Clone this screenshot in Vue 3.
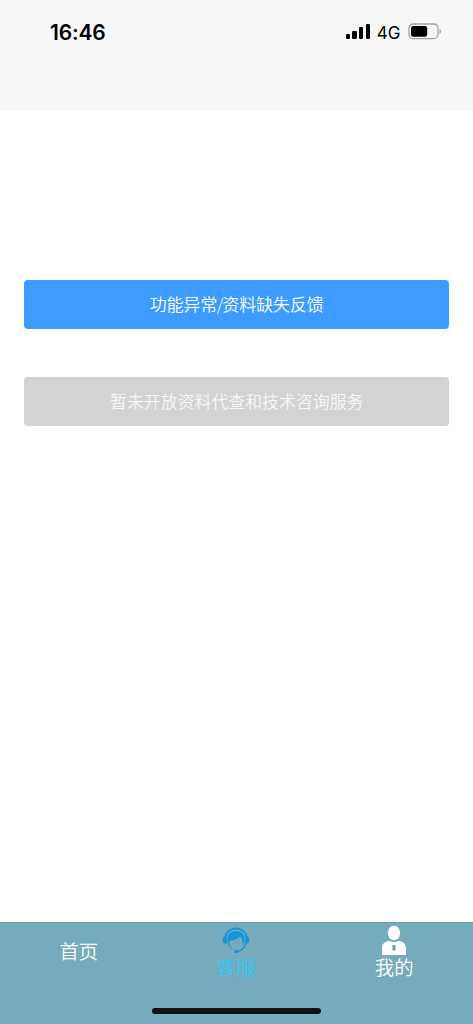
<script setup>
const bars = [5.5, 8.5, 12, 15]
</script>

<template>
  <div class="screen">
    <header class="header">
      <div class="status">
        <span class="time">16:46</span>
        <div class="indicators">
          <div class="signal">
            <i v-for="h in bars" :key="h" :style="{ height: h + 'px' }"></i>
          </div>
          <span class="network">4G</span>
          <svg class="battery" width="34" height="17" viewBox="0 0 34 17">
            <rect x="1" y="1" width="29" height="14.6" rx="4.2" fill="none" stroke="#a2a2a2" stroke-width="1.3" />
            <rect x="3" y="3" width="16.2" height="10.8" rx="2.4" fill="#000" />
            <path d="M31.5 6v5c2-.8 2-4.200 0-5z" fill="#a2a2a2" />
          </svg>
        </div>
      </div>
    </header>

    <main class="content">
      <button class="btn primary"><span>功能异常<span class="slash">/</span>资料缺失反馈</span></button>
      <button class="btn disabled"><span>暂未开放资料代查和技术咨询服务</span></button>
    </main>

    <footer class="footer">
      <nav class="tabs">
        <a class="tab plain"><span>首页</span></a>
        <a class="tab active">
          <svg width="28" height="30" viewBox="0 0 28 30">
            <path d="M3.600 11.500C5.500 .8 22.500 .8 24.400 11.500" fill="none" stroke="#1296db" stroke-width="1.800" />
            <path d="M4.800 10.500C2 10.700 .7 12.200 .7 14.700s1.300 4.300 4.100 4.300zM23.200 10.500c2.800.2 4.100 1.700 4.100 4.200s-1.300 4.300-4.100 4.300z" fill="#1296db" />
            <path d="M5.500 16C4.700 9.500 8 6 14 6s9.300 3.500 8.500 10c-.3 2-.9 3.800-2 5.300.5-4-.2-7.500-2.500-10.100-2.300 2.700-5.800 3.900-9.800 4.500-1.700 2.100-.5 5.500 2.800 8.700C8 23.100 6 20.200 5.500 16z" fill="#1296db" />
            <path d="M24.100 18.500c-1.500 4.400-4.900 7.300-9.100 8" fill="none" stroke="#1296db" stroke-width="1.300" />
            <ellipse cx="14.300" cy="26.500" rx="2.200" ry="1.800" fill="#1296db" />
          </svg>
          <span>客服</span>
        </a>
        <a class="tab">
          <svg width="28" height="30" viewBox="0 0 28 30">
            <ellipse cx="14" cy="8" rx="6.100" ry="7.300" fill="#fff" />
            <path d="M2 30v-6.500c0-4.500 2.400-6.700 7-7.700 3 1.600 7 1.600 10 0 4.600 1 7 3.200 7 7.700V30z" fill="#fff" />
            <path d="M12.500 20h3v5.500h-3z" fill="#699eb4" />
          </svg>
          <span>我的</span>
        </a>
      </nav>
      <div class="home-indicator"></div>
    </footer>
  </div>
</template>

<style>
body {
  margin: 0;
}
</style>

<style scoped>
.screen {
  width: 473px;
  height: 1024px;
  display: flex;
  flex-direction: column;
  background: #fff;
  overflow: hidden;
  font-family: "Liberation Sans", "Noto Sans CJK SC", sans-serif;
}
.header {
  height: 111px;
  flex: none;
  background: #f7f7f7;
}
.status {
  height: 63px;
  display: flex;
  justify-content: space-between;
  align-items: center;
  padding: 0 31.500px 0 50px;
  font-family: Inter, sans-serif;
  color: #000;
}
.time {
  padding-top: 2px;
  font-size: 21px;
  font-weight: 600;
  letter-spacing: -0.2px;
}
.indicators {
  display: flex;
  align-items: center;
}
.signal {
  display: flex;
  align-items: flex-end;
  gap: 2.400px;
  height: 15px;
}
.signal i {
  width: 4.200px;
  border-radius: 1.300px;
  background: #000;
}
.network {
  font-size: 17px;
  margin: 2px 7px 0 7px;
}
.battery {
  display: block;
}
.content {
  flex: 1;
  display: flex;
  flex-direction: column;
  gap: 48.500px;
  padding: 169.400px 23.700px 0 24.200px;
}
.btn {
  height: 48.500px;
  border: 0;
  border-radius: 4px;
  padding: 0 0 2px;
  color: #fff;
  font-family: "Noto Sans CJK SC", sans-serif;
  font-size: 16.900px;
  font-weight: 350;
  line-height: 46px;
}
.slash {
  display: inline-block;
  width: 5px;
  font-weight: 300;
  text-indent: -0.700px;
}
.primary {
  background: #3c9cff;
}
.disabled {
  background: #d3d3d3;
  color: #f8f8f8;
}
.footer {
  height: 102.500px;
  flex: none;
  box-sizing: border-box;
  border-top: 1px solid #6b9eb1;
  background: #76aabd;
  display: flex;
  flex-direction: column;
  align-items: center;
}
.tabs {
  width: 100%;
  height: 58px;
  display: grid;
  grid-template-columns: repeat(3, 1fr);
}
.tab {
  display: flex;
  flex-direction: column;
  align-items: center;
  padding-top: 2px;
  color: #fff;
  font-family: "Noto Sans CJK SC", sans-serif;
  font-size: 19.400px;
  font-weight: 350;
  line-height: 24px;
}
.plain {
  padding-top: 16px;
}
.active {
  color: #35c8f8;
}
.tab svg {
  display: block;
}
.home-indicator {
  width: 169px;
  height: 6px;
  margin-top: 27px;
  border-radius: 3px;
  background: #111;
}
</style>
